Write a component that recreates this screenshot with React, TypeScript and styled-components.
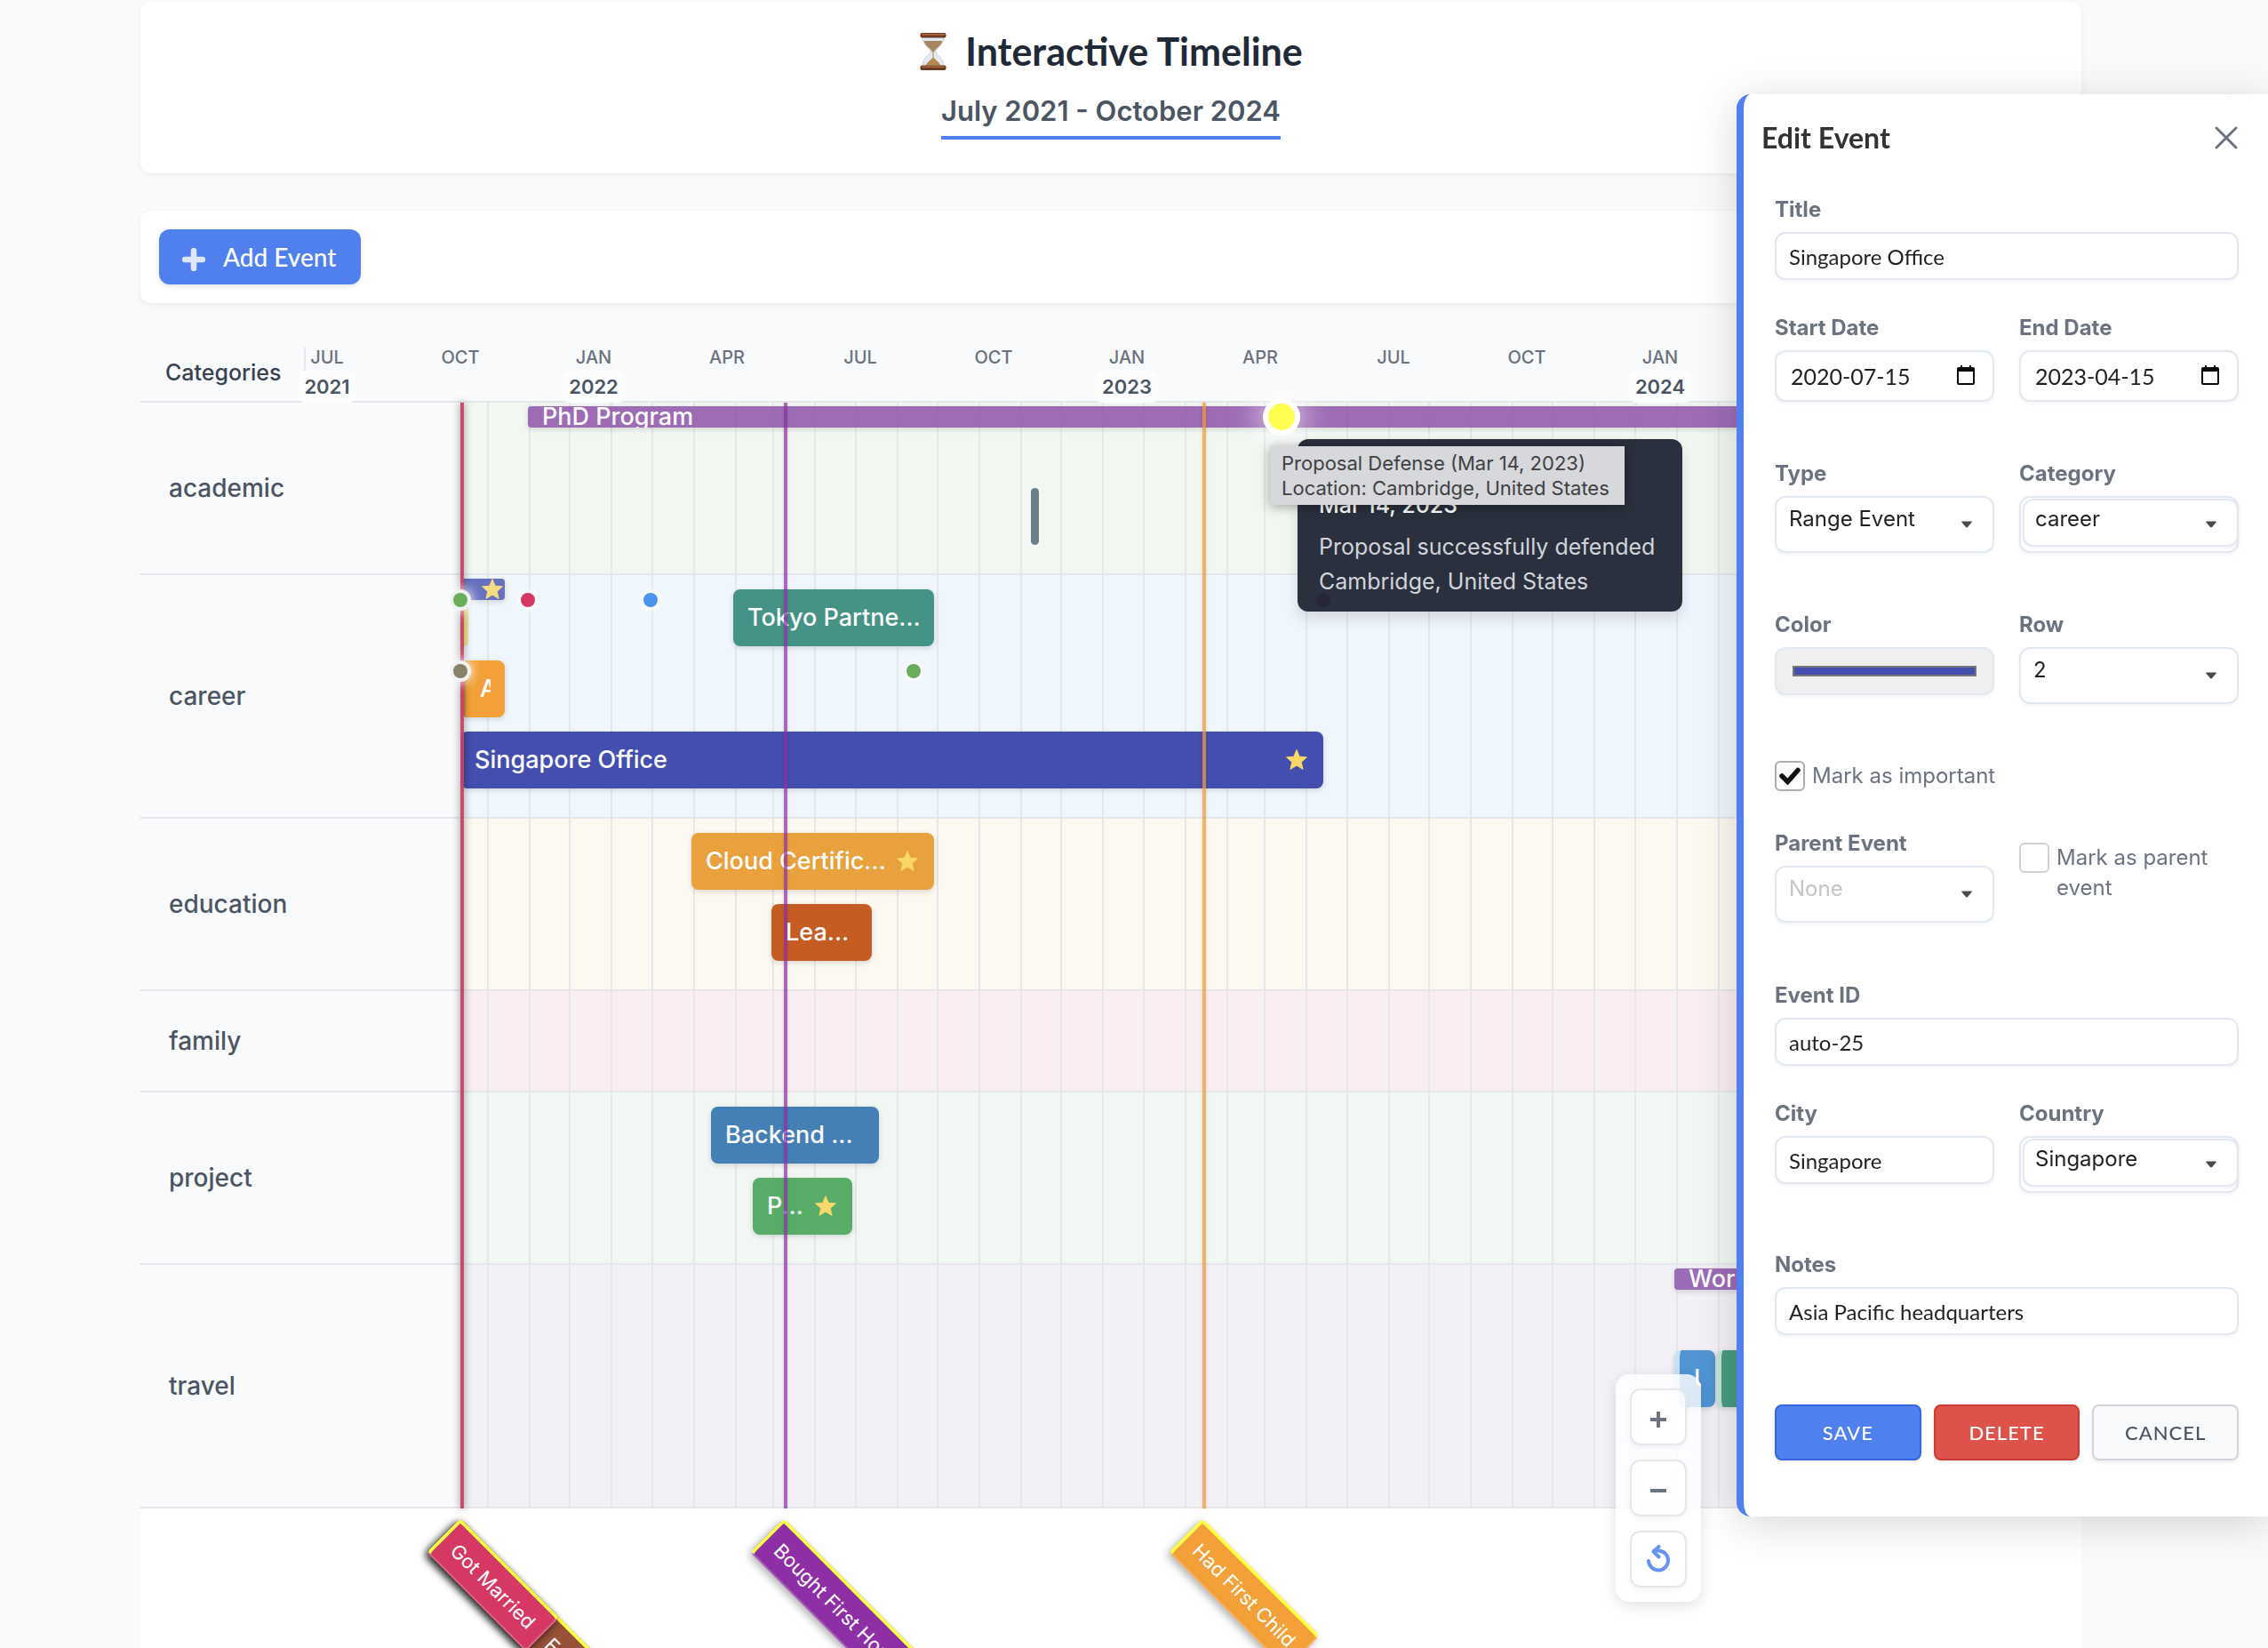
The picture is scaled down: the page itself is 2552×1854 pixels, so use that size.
import React from "react";
import styled, { createGlobalStyle, css } from "styled-components";

const ui = `Inter, "Liberation Sans", sans-serif`;
const lato = `Lato, "Liberation Sans", sans-serif`;

const GlobalStyle = createGlobalStyle`
  *, *::before, *::after { box-sizing: border-box; }
  html, body { margin: 0; padding: 0; }
  body { background: #f9fafc; font-family: ${ui}; color: #4b5563; }
  button, input, select { margin: 0; font: inherit; color: inherit; }
`;

/* ---------- page ---------- */

const Page = styled.div`
  display: flex;
  flex-direction: column;
  gap: 42px;
  height: 100vh;
  padding: 2px 210px 0 158px;
  overflow: hidden;
`;

const Card = styled.section`
  background: #fff;
  border-radius: 12px;
  box-shadow: 0 2px 6px rgba(0, 0, 0, 0.06);
`;

const TitleCard = styled(Card)`
  display: flex;
  flex-direction: column;
  align-items: center;
  flex: none;
  gap: 18px;
  padding: 29px 0 38px;
`;

const Title = styled.h1`
  display: flex;
  align-items: center;
  gap: 20px;
  margin: 0;
  font: 700 43px/54px ${lato};
  color: #1f2937;
`;

const Range = styled.p`
  margin: 0;
  padding-bottom: 6px;
  border-bottom: 4px solid #4f80ee;
  font-size: 31px;
  font-weight: 600;
  line-height: 44px;
`;

const Toolbar = styled(Card)`
  display: flex;
  flex: none;
  padding: 21px;
`;

const AddButton = styled.button`
  display: flex;
  align-items: center;
  gap: 20px;
  height: 62px;
  padding: 0 28px 0 26px;
  border: 0;
  border-radius: 12px;
  background: #4f80ee;
  box-shadow: 0 2px 6px rgba(0, 0, 0, 0.12);
  color: #fff;
  font: 500 28px/36px ${lato};
  svg { margin-top: 6px; }
`;

/* ---------- timeline ---------- */

const Timeline = styled.section`
  display: flex;
  flex-direction: column;
  flex: 1;
  min-height: 0;
  background: #fff;
`;

const Axis = styled.div`
  display: flex;
  flex: none;
  height: 70px;
  border-bottom: 2px solid #e5e7eb;
  background: #f9fafc;
`;

const AxisTitle = styled.div`
  display: flex;
  align-items: center;
  width: 186px;
  height: 56px;
  margin-top: 8px;
  padding-left: 28px;
  border-right: 2px solid #e5e7eb;
  font-size: 25px;
  font-weight: 500;
  color: #374151;
`;

const Ticks = styled.div`
  position: relative;
  flex: 1;
`;

const Tick = styled.div`
  position: absolute;
  top: 6px;
  display: flex;
  flex-direction: column;
  align-items: center;
  width: 80px;
  margin-left: -40px;
  font-size: 20px;
  font-weight: 500;
  line-height: 26px;
  color: #6b7280;
`;

const Year = styled.span`
  margin-top: 2px;
  padding: 3px 7px;
  border-radius: 8px;
  background: #fcfdfd;
  font-size: 22px;
  font-weight: 600;
  line-height: 30px;
  color: #4b5563;
`;

const Rows = styled.div`
  position: relative;
  flex: none;
`;

const Row = styled.div`
  display: flex;
  border-bottom: 2px solid #e5e7eb;
`;

const RowName = styled.div`
  display: flex;
  align-items: center;
  width: 360px;
  padding-left: 32px;
  background: #f9fafc;
  font-size: 28px;
  font-weight: 500;
`;

const Lanes = styled.div<{ $tint: string; $lanes: number }>`
  position: relative;
  flex: 1;
  height: ${(p) => p.$lanes * 80 + 32}px;
  background: ${(p) => p.$tint};
  overflow: hidden;
`;

const GridLine = styled.i`
  position: absolute;
  top: 0;
  bottom: 0;
  width: 2px;
  background: #e5e7eb;
`;

const Bar = styled.div<{ $lane: number; $color: string; $slim?: boolean; $edge?: string }>`
  position: absolute;
  top: ${(p) => (p.$slim ? 4 : 16 + p.$lane * 80)}px;
  display: flex;
  align-items: center;
  gap: 4px;
  height: ${(p) => (p.$slim ? 24 : 64)}px;
  padding: 0 16px;
  border-radius: ${(p) => (p.$slim ? 4 : 8)}px;
  background: ${(p) => p.$color};
  background-clip: padding-box;
  box-shadow: 0 2px 6px rgba(0, 0, 0, 0.14);
  color: #fff;
  font-size: 27px;
  font-weight: 500;
  line-height: 36px;
  white-space: nowrap;
  overflow: hidden;
  ${(p) => p.$edge && css`border-left: 6px solid ${p.$edge};`}
  svg { flex: none; }
`;

const BarText = styled.span`
  flex: 1;
  min-width: 0;
  overflow: hidden;
`;

const Sliver = styled.i<{ $color: string; $lane: number }>`
  position: absolute;
  top: ${(p) => 16 + p.$lane * 80}px;
  height: 64px;
  width: 9px;
  border-radius: 5px;
  background: ${(p) => p.$color};
`;

const SlimStar = styled.span`
  margin-left: auto;
  margin-right: -16px;
  height: 28px;
`;

const Marker = styled.i<{ $color: string }>`
  position: absolute;
  z-index: 3;
  top: 0;
  bottom: 0;
  width: 4px;
  margin-left: -2px;
  background: ${(p) => p.$color};
  box-shadow: 0 0 4px rgba(0, 0, 0, 0.12);
`;

const StrongMarker = styled(Marker)`
  margin-left: 0;
  box-shadow: 0 0 8px rgba(0, 0, 0, 0.5);
`;

const Dot = styled.i<{ $color: string; $big?: boolean; $strong?: boolean }>`
  position: absolute;
  z-index: 4;
  width: ${(p) => (p.$big ? 30 : 16)}px;
  height: ${(p) => (p.$big ? 30 : 16)}px;
  border-radius: 50%;
  transform: translate(-50%, -50%);
  background: ${(p) => p.$color};
  box-shadow: ${(p) =>
    p.$big
      ? "0 0 0 6px #fff, 0 0 30px 14px rgba(255,255,255,0.5)"
      : p.$strong
      ? "0 0 0 4px #f1f3f0, 0 0 12px 6px rgba(255,255,255,0.8)"
      : "0 0 0 4px rgba(255,255,255,0.45), 0 0 10px 5px rgba(255,255,255,0.35)"};
`;

const DetailTip = styled.div`
  position: absolute;
  z-index: 5;
  left: 1302px;
  top: 41px;
  width: 433px;
  padding: 12px 24px 14px;
  border-radius: 12px;
  background: rgba(31, 37, 51, 0.95);
  box-shadow: 0 8px 16px rgba(0, 0, 0, 0.12);
  color: #d1d5db;
  font-size: 25px;
  line-height: 39px;
  white-space: nowrap;
  p { margin: 0; }
`;

const TipDate = styled.p`
  padding: 43px 0 8px;
  color: #fff;
  font-weight: 500;
`;

const NativeTip = styled.div`
  position: absolute;
  z-index: 6;
  left: 1271px;
  top: 49px;
  width: 399px;
  padding: 5px 0 5px 13px;
  background: #d7d8db;
  box-shadow: 0 2px 12px rgba(0, 0, 0, 0.35);
  color: #3f4043;
  font-size: 22px;
  line-height: 28px;
  white-space: nowrap;
`;

const Flags = styled.div`
  position: relative;
  flex: 1;
  min-height: 0;
`;

const Flag = styled.div<{ $color: string; $stacked?: boolean }>`
  position: absolute;
  top: 11px;
  display: flex;
  align-items: center;
  height: 54px;
  padding: 0 14px 0 14px;
  border: 2px solid rgba(255, 255, 255, 0.25);
  border-top: 4px solid #ffff45;
  border-left: 4px solid #ffff45;
  border-radius: 6px;
  background: ${(p) => p.$color};
  box-shadow: ${(p) =>
    p.$stacked ? "0 4px 8px rgba(0,0,0,0.8)" : "0 4px 10px rgba(0,0,0,0.3)"};
  color: #fff;
  font-size: 22px;
  white-space: nowrap;
  transform: rotate(45deg);
  transform-origin: 0 0;
`;

const RearFlag = styled(Flag)`
  width: 320px;
  padding-left: 164px;
`;

/* ---------- zoom controls ---------- */

const ZoomBox = styled.div`
  position: fixed;
  z-index: 10;
  right: 638px;
  bottom: 52px;
  display: flex;
  flex-direction: column;
  gap: 16px;
  padding: 16px;
  border-radius: 16px;
  background: rgba(255, 255, 255, 0.8);
  box-shadow: 0 4px 16px rgba(0, 0, 0, 0.12);
`;

const ZoomButton = styled.button`
  display: flex;
  align-items: center;
  justify-content: center;
  width: 64px;
  height: 64px;
  padding: 0;
  border: 2px solid #e6e7ed;
  border-radius: 12px;
  background: rgba(255, 255, 255, 0.7);
  box-shadow: 0 2px 6px rgba(0, 0, 0, 0.06);
`;

/* ---------- edit panel ---------- */

const Panel = styled.aside`
  position: fixed;
  z-index: 20;
  top: 106px;
  right: 0;
  width: 598px;
  padding: 27px 33px 63px 35px;
  border-left: 8px solid #4f80ee;
  border-radius: 16px 0 0 16px;
  background: #fff;
  box-shadow: 0 8px 48px rgba(0, 0, 0, 0.16);
`;

const PanelHead = styled.header`
  display: flex;
  align-items: center;
  justify-content: space-between;
  height: 44px;
  margin: 0 0 42px -15px;
`;

const PanelTitle = styled.h2`
  margin: 0;
  font: 700 32px/44px ${lato};
  color: #333;
`;

const CloseButton = styled.button`
  display: flex;
  padding: 0;
  border: 0;
  background: none;
`;

const Line = styled.div<{ $after: number }>`
  display: grid;
  grid-auto-flow: column;
  grid-auto-columns: minmax(0, 1fr);
  align-items: start;
  gap: 28px;
  margin-bottom: ${(p) => p.$after}px;
`;

const Field = styled.div`
  display: flex;
  flex-direction: column;
  gap: 8px;
`;

const Label = styled.label`
  font-size: 24px;
  font-weight: 700;
  line-height: 34px;
  color: #6b7280;
`;

const box = css`
  width: 100%;
  border: 2px solid #e2e8f0;
  border-radius: 12px;
  background: #fff;
  box-shadow: 0 2px 4px rgba(0, 0, 0, 0.05);
  color: #1f2023;
`;

const Input = styled.input`
  ${box}
  height: 54px;
  padding: 0 14px;
  font: 400 24px/32px ${lato};
`;

const DateInput = styled(Input)`
  height: 58px;
  padding: 0 16px;
  font-size: 25px;
`;

const ColorInput = styled.input`
  ${box}
  height: 54px;
  padding: 19px 18px;
  background: #efefef;
  &::-webkit-color-swatch-wrapper { padding: 0; }
  &::-webkit-color-swatch { border: 2px solid #777; border-radius: 0; }
`;

const Wrap = styled.div<{ $nested?: boolean }>`
  position: relative;
  ${(p) => p.$nested && css`${box} height: 64px; padding: 1px 0 0 2px;`}
`;

const Select = styled.select<{ $nested?: boolean; $muted?: boolean }>`
  ${box}
  display: block;
  appearance: none;
  width: ${(p) => (p.$nested ? "calc(100% + 2px)" : "100%")};
  height: ${(p) => (p.$nested ? 54 : 64)}px;
  padding: 0 14px ${(p) => (p.$nested ? 10 : 14)}px ${(p) => (p.$nested ? 12 : 14)}px;
  font-size: 24px;
  ${(p) => p.$muted && "color: #c4c5c9;"}
`;

const Adorn = styled.span<{ $right: number; $top: number }>`
  position: absolute;
  right: ${(p) => p.$right}px;
  top: ${(p) => p.$top}px;
  display: flex;
  pointer-events: none;
`;

const Check = styled.label`
  display: flex;
  align-items: flex-start;
  gap: 8px;
  font-size: 24px;
  line-height: 34px;
  color: #6b7280;
`;

const CheckBox = styled.span`
  display: grid;
  flex: none;
  place-items: center;
  input {
    grid-area: 1 / 1;
    appearance: none;
    width: 34px;
    height: 34px;
    border: 2px solid #d1d1d3;
    border-radius: 6px;
    background: #fff;
  }
  input:checked { border-color: #adadaf; }
  svg { grid-area: 1 / 1; z-index: 1; pointer-events: none; }
`;

const SideCheck = styled.div`
  padding-top: 16px;
`;

const Actions = styled.div`
  display: grid;
  grid-template-columns: repeat(3, 1fr);
  gap: 14px;
  margin-top: 78px;
`;

const Action = styled.button<{ $bg: string; $line: string; $ink: string }>`
  height: 63px;
  border: 2px solid ${(p) => p.$line};
  border-radius: 8px;
  background: ${(p) => p.$bg};
  box-shadow: 0 2px 4px rgba(0, 0, 0, 0.08);
  color: ${(p) => p.$ink};
  font: 500 22px/30px ${lato};
  letter-spacing: 1px;
`;

/* ---------- drawings ---------- */

const Star = ({ color = "#f8d866" }) => (
  <svg width="28" height="28" viewBox="0 0 28 28" aria-hidden="true">
    <path
      d="M14 2.6l3.2 7.6 8.2.7-6.2 5.4 1.9 8.1-7.1-4.3-7.1 4.3 1.9-8.1L2.6 10.900l8.200-.7z"
      fill={color}
      stroke={color}
      strokeWidth="1"
      strokeLinejoin="round"
    />
  </svg>
);

const Hourglass = () => (
  <svg width="32" height="44" viewBox="0 0 32 44" aria-hidden="true">
    <path d="M4 6h24c0 9-9 12-9 16s9 7 9 16H4c0-9 9-12 9-16S4 15 4 6z" fill="#e3e9f5" stroke="#c9cfdd" />
    <path d="M5.500 10h21c-1.500 6-8.500 9-9.500 12.500h-2C14 19 7 16 5.500 10z" fill="#a88561" />
    <path d="M15.500 20h1v9c3 3 6 5 8 8.500h-17c2-3.500 5-5.500 8-8.500z" fill="#b48a4e" />
    <rect x="1.500" y="1" width="29" height="5.500" rx="2" fill="#6d3a22" />
    <rect x="3" y="2" width="26" height="1.500" rx="0.700" fill="#b06a42" />
    <rect x="1.500" y="37.500" width="29" height="5.500" rx="2" fill="#6d3a22" />
    <rect x="3" y="38.500" width="26" height="1.500" rx="0.700" fill="#b06a42" />
  </svg>
);

const Caret = () => (
  <svg width="12" height="8" viewBox="0 0 12 8" aria-hidden="true">
    <path d="M1 .6h10c.8 0 1 .7.500 1.200L7 7.100c-.6.600-1.400.600-2 0L.5 1.800C0 1.300.2.600 1 .6z" fill="#4a4a4a" />
  </svg>
);

const Calendar = () => (
  <svg width="20" height="22" viewBox="0 0 20 22" aria-hidden="true">
    <path d="M4 0h2v2h8V0h2v2h2a2 2 0 012 2v16a2 2 0 01-2 2H2a2 2 0 01-2-2V4a2 2 0 012-2h2zM2 7v13h16V7z" fill="#0a0a0a" />
  </svg>
);

/* ---------- data ---------- */

const PX_PER_DAY = 1.515;
const monthDays = [31, 30, 31, 30, 31, 31, 28, 31, 30, 31, 30, 31, 31, 30, 31, 30, 31, 31, 28, 31, 30, 31, 30, 31, 31, 30, 31, 30, 31, 31, 29, 31, 30, 31, 30, 31, 31, 30];
const gridLines = monthDays.reduce<number[]>(
  (xs, d) => [...xs, xs[xs.length - 1] + d],
  [0]
).slice(0, 38).map((d) => 30 + Math.round(d * PX_PER_DAY));

const ticks: [string, string?][] = [
  ["JUL", "2021"], ["OCT"], ["JAN", "2022"], ["APR"], ["JUL"], ["OCT"],
  ["JAN", "2023"], ["APR"], ["JUL"], ["OCT"], ["JAN", "2024"], ["APR"], ["JUL"],
];

type Ev = {
  text?: string; lane: number; from: number; to: number; color: string;
  slim?: boolean; star?: boolean; edge?: string;
};

const rows: { name: string; tint: string; lanes: number; events: Ev[]; slivers?: [number, number, string][] }[] = [
  {
    name: "academic", tint: "#f3f7f2", lanes: 2,
    events: [{ text: "PhD Program", lane: 0, from: 76, to: 1800, color: "rgba(147, 92, 174, 0.9)", slim: true }],
    slivers: [[642, 1, "#6a7f8c"]],
  },
  {
    name: "career", tint: "#f0f6fd", lanes: 3,
    events: [
      { lane: 0, from: 0, to: 50, color: "#6871bf", slim: true, star: true },
      { text: "Tokyo Partne...", lane: 0, from: 307, to: 533, color: "#449386" },
      { text: "A", lane: 1, from: 0, to: 50, color: "#f2a037", edge: "#c98a3c" },
      { text: "Singapore Office", lane: 2, from: 0, to: 971, color: "#444eae", star: true },
    ],
    slivers: [[0, 0, "#f3e58c"]],
  },
  {
    name: "education", tint: "#fdf8f0", lanes: 2,
    events: [
      { text: "Cloud Certific...", lane: 0, from: 260, to: 533, color: "#e8a13c", star: true },
      { text: "Lea...", lane: 1, from: 350, to: 463, color: "#c55c24" },
    ],
  },
  { name: "family", tint: "#fbeef2", lanes: 1, events: [] },
  {
    name: "project", tint: "#f1f7f3", lanes: 2,
    events: [
      { text: "Backend ...", lane: 0, from: 282, to: 471, color: "#447fb6" },
      { text: "P...", lane: 1, from: 329, to: 441, color: "#57ac68", star: true },
    ],
  },
  {
    name: "travel", tint: "#f3f0f7", lanes: 3,
    events: [
      { text: "Work Travel", lane: 0, from: 1366, to: 1700, color: "#9c6bb6", slim: true },
      { text: "U", lane: 1, from: 1366, to: 1412, color: "#5195d4", edge: "#c9dff2" },
      { text: "", lane: 1, from: 1413, to: 1500, color: "#489a80", edge: "#c5dfd8" },
    ],
  },
];

const dots: { x: number; y: number; color: string; big?: boolean; strong?: boolean }[] = [
  { x: 1284, y: 16, color: "#ffff50", big: true },
  { x: 360, y: 222, color: "#6aad5c", strong: true },
  { x: 436, y: 222, color: "#d63864" },
  { x: 574, y: 222, color: "#4a94ee" },
  { x: 1331, y: 222, color: "#d63864" },
  { x: 360, y: 302, color: "#8a816b", strong: true },
  { x: 870, y: 302, color: "#6aad5c" },
];

/* ---------- parts ---------- */

const Dropdown = ({ id, value, nested, muted }: { id: string; value: string; nested?: boolean; muted?: boolean }) => (
  <Wrap $nested={nested}>
    <Select id={id} defaultValue={value} $nested={nested} $muted={muted}>
      <option>{value}</option>
    </Select>
    <Adorn $right={nested ? 23 : 25} $top={nested ? 26 : 28}><Caret /></Adorn>
  </Wrap>
);

const TextField = ({ id, label, value }: { id: string; label: string; value: string }) => (
  <Field>
    <Label htmlFor={id}>{label}</Label>
    <Input id={id} type="text" defaultValue={value} />
  </Field>
);

const DateField = ({ id, label, value }: { id: string; label: string; value: string }) => (
  <Field>
    <Label htmlFor={id}>{label}</Label>
    <Wrap>
      <DateInput id={id} type="text" defaultValue={value} />
      <Adorn $right={22} $top={17}><Calendar /></Adorn>
    </Wrap>
  </Field>
);

const SelectField = (p: { id: string; label: string; value: string; nested?: boolean; muted?: boolean }) => (
  <Field>
    <Label htmlFor={p.id}>{p.label}</Label>
    <Dropdown id={p.id} value={p.value} nested={p.nested} muted={p.muted} />
  </Field>
);

const EditPanel = () => (
  <Panel>
    <PanelHead>
      <PanelTitle>Edit Event</PanelTitle>
      <CloseButton aria-label="Close">
        <svg width="28" height="28" viewBox="0 0 28 28" aria-hidden="true">
          <path d="M3 3l22 22M25 3L3 25" stroke="#6b7280" strokeWidth="3" strokeLinecap="round" />
        </svg>
      </CloseButton>
    </PanelHead>
    <Line $after={37}><TextField id="title" label="Title" value="Singapore Office" /></Line>
    <Line $after={64}>
      <DateField id="start" label="Start Date" value="2020-07-15" />
      <DateField id="end" label="End Date" value="2023-04-15" />
    </Line>
    <Line $after={64}>
      <SelectField id="type" label="Type" value="Range Event" />
      <SelectField id="category" label="Category" value="career" nested />
    </Line>
    <Line $after={64}>
      <Field>
        <Label htmlFor="color">Color</Label>
        <ColorInput id="color" type="color" defaultValue="#444eae" />
      </Field>
      <SelectField id="row" label="Row" value="2" />
    </Line>
    <Line $after={42}>
      <Check>
        <CheckBox>
          <input type="checkbox" defaultChecked />
          <svg width="24" height="20" viewBox="0 0 24 20" aria-hidden="true">
            <path d="M3 10l6.500 6.500L21 3.500" fill="none" stroke="#111" strokeWidth="5.500" strokeLinecap="round" />
          </svg>
        </CheckBox>
        Mark as important
      </Check>
    </Line>
    <Line $after={65}>
      <SelectField id="parent" label="Parent Event" value="None" muted />
      <SideCheck>
        <Check>
          <CheckBox><input type="checkbox" /></CheckBox>
          Mark as parent event
        </Check>
      </SideCheck>
    </Line>
    <Line $after={37}><TextField id="eventId" label="Event ID" value="auto-25" /></Line>
    <Line $after={64}>
      <TextField id="city" label="City" value="Singapore" />
      <SelectField id="country" label="Country" value="Singapore" nested />
    </Line>
    <Line $after={0}><TextField id="notes" label="Notes" value="Asia Pacific headquarters" /></Line>
    <Actions>
      <Action $bg="#4f80ee" $line="#3764e0" $ink="#fff">SAVE</Action>
      <Action $bg="#de524c" $line="#cb3a33" $ink="#fff">DELETE</Action>
      <Action $bg="#f9fafc" $line="#d1d5db" $ink="#4b5563">CANCEL</Action>
    </Actions>
  </Panel>
);

export default function App() {
  return (
    <>
      <GlobalStyle />
      <Page>
        <TitleCard>
          <Title><Hourglass />Interactive Timeline</Title>
          <Range>July 2021 - October 2024</Range>
        </TitleCard>
        <Toolbar>
          <AddButton>
            <svg width="26" height="26" viewBox="0 0 26 26" aria-hidden="true">
              <path d="M13 3v20M3 13h20" stroke="#dde6fb" strokeWidth="6.500" strokeLinecap="round" />
            </svg>
            Add Event
          </AddButton>
        </Toolbar>
        <Timeline>
          <Axis>
            <AxisTitle>Categories</AxisTitle>
            <Ticks>
              {ticks.map(([m, y], i) => (
                <Tick key={i} style={{ left: 24 + i * 150 }}>
                  {m}
                  {y && <Year>{y}</Year>}
                </Tick>
              ))}
            </Ticks>
          </Axis>
          <Rows>
            {rows.map((r) => (
              <Row key={r.name}>
                <RowName>{r.name}</RowName>
                <Lanes $tint={r.tint} $lanes={r.lanes}>
                  {gridLines.map((x) => <GridLine key={x} style={{ left: x }} />)}
                  {r.slivers?.map(([x, lane, c]) => (
                    <Sliver key={x} $lane={lane} $color={c} style={{ left: x }} />
                  ))}
                  {r.events.map((e, i) => (
                    <Bar key={i} $lane={e.lane} $color={e.color} $slim={e.slim} $edge={e.edge} style={{ left: e.from, width: e.to - e.from }}>
                      {e.text && <BarText>{e.text}</BarText>}
                      {e.star && (e.slim ? <SlimStar><Star color="#f5dc80" /></SlimStar> : <Star />)}
                    </Bar>
                  ))}
                </Lanes>
              </Row>
            ))}
            <StrongMarker $color="rgba(196, 66, 102, 0.95)" style={{ left: 360 }} />
            <Marker $color="rgba(142, 47, 165, 0.72)" style={{ left: 726 }} />
            <Marker $color="rgba(240, 155, 55, 0.75)" style={{ left: 1197 }} />
            {dots.map((d, i) => (
              <Dot key={i} $color={d.color} $big={d.big} $strong={d.strong} style={{ left: d.x, top: d.y }} />
            ))}
            <DetailTip>
              <TipDate>Mar 14, 2023</TipDate>
              <p>Proposal successfully defended</p>
              <p>Cambridge, United States</p>
            </DetailTip>
            <NativeTip>
              Proposal Defense (Mar 14, 2023)<br />Location: Cambridge, United States
            </NativeTip>
          </Rows>
          <Flags>
            <RearFlag $color="#965138" style={{ left: 360 }}>E</RearFlag>
            <Flag $color="#d63864" $stacked style={{ left: 360 }}>Got Married</Flag>
            <Flag $color="#8e2fa5" style={{ left: 724 }}>Bought First Home</Flag>
            <Flag $color="#f2a037" style={{ left: 1195 }}>Had First Child</Flag>
          </Flags>
        </Timeline>
      </Page>
      <ZoomBox>
        <ZoomButton aria-label="Zoom in">
          <svg width="20" height="26" viewBox="0 0 20 26" aria-hidden="true">
            <path d="M10 7v18M1 16h18" stroke="#6b7280" strokeWidth="4" />
          </svg>
        </ZoomButton>
        <ZoomButton aria-label="Zoom out">
          <svg width="20" height="26" viewBox="0 0 20 26" aria-hidden="true">
            <path d="M1 16h18" stroke="#6b7280" strokeWidth="4" />
          </svg>
        </ZoomButton>
        <ZoomButton aria-label="Reset view">
          <svg width="28" height="32" viewBox="0 0 28 32" aria-hidden="true">
            <path d="M3 18a11 11 0 1 0 11-11.500H9M14.500 2L8.500 7.500l6 6" fill="none" stroke="#6494f2" strokeWidth="4" strokeLinecap="round" strokeLinejoin="round" />
          </svg>
        </ZoomButton>
      </ZoomBox>
      <EditPanel />
    </>
  );
}
